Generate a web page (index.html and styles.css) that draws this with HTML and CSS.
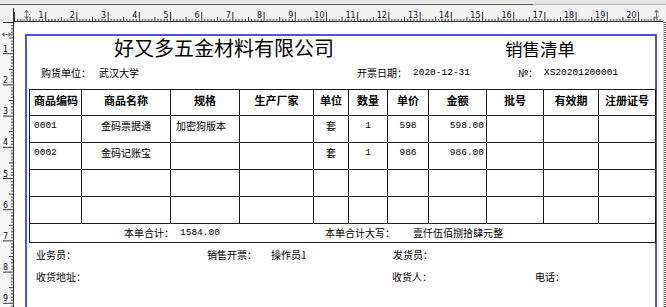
FILE: index.html
```html
<!DOCTYPE html>
<html lang="zh">
<head>
<meta charset="utf-8">
<title>销售清单 - 打印预览</title>
<link rel="stylesheet" href="styles.css">
</head>
<body>
<div class="app">
  <div class="topbar">
    <svg class="hruler" width="666" height="22" viewBox="0 0 666 22">
      <defs>
        <pattern id="hticks" x="14" y="0" width="31.2" height="22" patternUnits="userSpaceOnUse">
          <path d="M0.5 12V21 M3.6 19V21 M6.7 19V21 M9.9 19V21 M13 19V21 M16.1 17V21 M19.2 19V21 M22.3 19V21 M25.5 19V21 M28.6 19V21" stroke="#333" stroke-width="1" fill="none"/>
        </pattern>
      </defs>
      <rect width="666" height="22" fill="#f2f2f2"/>
      <rect width="666" height="4" fill="#e6e6e6"/>
      <line x1="0" y1="4.5" x2="533" y2="4.5" stroke="#5a5a5a"/>
      <line x1="533" y1="4.5" x2="666" y2="4.5" stroke="#b8b8b8"/>
      <rect x="14" y="8" width="649" height="14" fill="url(#hticks)"/>
      <line x1="13" y1="21.5" x2="663" y2="21.5" stroke="#333"/>
      <line x1="13.5" y1="8" x2="13.5" y2="22" stroke="#333"/>
      <g class="ruler-num" text-anchor="end">
        <text x="43.7" y="18">1</text><text x="74.9" y="18">2</text><text x="106.1" y="18">3</text><text x="137.3" y="18">4</text><text x="168.5" y="18">5</text>
        <text x="199.7" y="18">6</text><text x="230.9" y="18">7</text><text x="262.1" y="18">8</text><text x="293.3" y="18">9</text><text x="324.5" y="18">10</text>
        <text x="355.7" y="18">11</text><text x="386.9" y="18">12</text><text x="418.1" y="18">13</text><text x="449.3" y="18">14</text><text x="480.5" y="18">15</text>
        <text x="511.7" y="18">16</text><text x="542.9" y="18">17</text><text x="574.1" y="18">18</text><text x="605.3" y="18">19</text><text x="636.5" y="18">20</text>
      </g>
      <g class="marker" stroke="#777" fill="#777">
        <path d="M26.5 10V19" fill="none"/>
        <path d="M24 12.5L26.5 9.5L29 12.5Z M24 16.5L26.5 19.5L29 16.5Z" stroke="none"/>
        <rect x="29" y="14" width="1" height="1" stroke="none"/>
        <path d="M656.5 10V19" fill="none"/>
        <path d="M654 12.5L656.5 9.5L659 12.5Z M654 16.5L656.5 19.5L659 16.5Z" stroke="none"/>
      </g>
    </svg>
  </div>
  <div class="main">
    <div class="vruler">
      <svg width="14" height="285" viewBox="0 0 14 285">
        <defs>
          <pattern id="vticks" x="0" y="0" width="14" height="31.2" patternUnits="userSpaceOnUse">
            <path d="M3 0.5H13 M11 3.6H13 M11 6.7H13 M11 9.9H13 M11 13H13 M9 16.1H13 M11 19.2H13 M11 22.3H13 M11 25.5H13 M11 28.6H13" stroke="#333" stroke-width="1" fill="none"/>
          </pattern>
        </defs>
        <rect width="14" height="285" fill="#f6f6f6"/>
        <rect x="0" y="0" width="13" height="285" fill="url(#vticks)"/>
        <line x1="13.5" y1="0" x2="13.5" y2="285" stroke="#333"/>
        <g class="ruler-num">
          <text x="3" y="29.7">1</text><text x="3" y="60.9">2</text><text x="3" y="92.1">3</text><text x="3" y="123.3">4</text><text x="3" y="154.5">5</text>
          <text x="3" y="185.7">6</text><text x="3" y="216.9">7</text><text x="3" y="248.1">8</text><text x="3" y="279.3">9</text>
        </g>
        <g class="marker" stroke="#777" fill="#777">
          <path d="M2 12.5H11" fill="none"/>
          <path d="M4.5 10L1.5 12.5L4.5 15Z M8.5 10L11.5 12.5L8.5 15Z" stroke="none"/>
        </g>
      </svg>
    </div>
    <div class="workspace">
      <div class="page">
        <div class="title-row">
          <h1 class="company">好又多五金材料有限公司</h1>
          <div class="doc-type">销售清单</div>
        </div>
        <div class="info-row">
          <div class="field"><span class="label">购货单位：</span><span class="value">武汉大学</span></div>
          <div class="field"><span class="label">开票日期：</span><span class="value num">2020-12-31</span></div>
          <div class="field"><span class="label short">№：</span><span class="value num">XS20201200001</span></div>
        </div>
        <table class="items">
          <colgroup>
            <col style="width:52px"><col style="width:89px"><col style="width:69px"><col style="width:74px"><col style="width:35px"><col style="width:39px"><col style="width:41px"><col style="width:58px"><col style="width:57px"><col style="width:55px"><col style="width:57px">
          </colgroup>
          <thead>
            <tr>
              <th>商品编码</th><th>商品名称</th><th>规格</th><th>生产厂家</th><th>单位</th><th>数量</th><th>单价</th><th>金额</th><th>批号</th><th>有效期</th><th>注册证号</th>
            </tr>
          </thead>
          <tbody>
            <tr>
              <td class="num">0001</td><td class="c">金码票据通</td><td class="l">加密狗版本</td><td></td><td class="c">套</td><td class="c num">1</td><td class="c num">598</td><td class="r num">598.00</td><td></td><td></td><td></td>
            </tr>
            <tr>
              <td class="num">0002</td><td class="c">金码记账宝</td><td class="l"></td><td></td><td class="c">套</td><td class="c num">1</td><td class="c num">986</td><td class="r num">986.00</td><td></td><td></td><td></td>
            </tr>
            <tr><td></td><td></td><td></td><td></td><td></td><td></td><td></td><td></td><td></td><td></td><td></td></tr>
            <tr><td></td><td></td><td></td><td></td><td></td><td></td><td></td><td></td><td></td><td></td><td></td></tr>
            <tr class="total-row">
              <td colspan="11">
                <div class="totals">
                  <span class="t-label">本单合计：</span><span class="num t-sum">1584.00</span>
                  <span class="t-label t-upper">本单合计大写：</span><span class="t-words">壹仟伍佰捌拾肆元整</span>
                </div>
              </td>
            </tr>
          </tbody>
        </table>
        <div class="footer">
          <div>业务员：</div>
          <div>销售开票：<span class="operator">操作员1</span></div>
          <div>发货员：</div>
          <div></div>
          <div>收货地址：</div>
          <div></div>
          <div class="receiver">收货人：</div>
          <div>电话：</div>
        </div>
      </div>
    </div>
    <div class="scroll-dots"></div>
  </div>
</div>
</body>
</html>
```

FILE: styles.css
```css
* { box-sizing: border-box; }

html, body {
  margin: 0;
  padding: 0;
}

body {
  width: 666px;
  height: 307px;
  overflow: hidden;
  background: #ffffff;
  color: #000;
  font-family: "Noto Sans CJK SC", "Noto Sans CJK JP", sans-serif;
  font-size: 10px;
}

.topbar { height: 22px; }
.topbar svg, .vruler svg { display: block; }

.ruler-num text {
  font-family: "DejaVu Sans", sans-serif;
  font-size: 8px;
  fill: #101030;
}

.main {
  display: flex;
  height: 285px;
}

.vruler {
  width: 14px;
  flex: none;
}

.workspace {
  flex: 1;
  padding: 12px 0 0 11px;
  overflow: hidden;
}

.scroll-dots {
  width: 3px;
  flex: none;
  background: repeating-linear-gradient(to bottom, #555 0 1px, #fff 1px 2px);
  border-left: 1px solid #cfcfcf;
}

.page {
  width: 632px;
  height: 300px;
  border: 2px solid #5050f0;
}

.title-row {
  display: flex;
  align-items: center;
  height: 24px;
}

.company {
  margin: 0 0 0 87px;
  font-size: 20px;
  font-weight: 400;
  line-height: 24px;
}

.doc-type {
  margin-left: 171px;
  font-size: 17.5px;
  line-height: 24px;
  padding-top: 2px;
}

.info-row {
  display: grid;
  grid-template-columns: 316px 161px 1fr;
  margin-top: 6px;
  padding-left: 14px;
  line-height: 14px;
}

.field { display: flex; }
.field .label { margin-right: 8px; }
.field:nth-child(2) .label { margin-right: 6px; }
.field .label.short { margin-right: 6px; }

.num {
  font-family: "Liberation Mono", "DejaVu Sans Mono", monospace;
  font-size: 9.5px;
}

.items {
  border-collapse: collapse;
  table-layout: fixed;
  width: 626px;
  margin: 9px 0 0 2px;
}

.items th,
.items td {
  border: 1px solid #1a1a1a;
  padding: 3px 4px 0;
  vertical-align: top;
  line-height: 14px;
  white-space: nowrap;
  overflow: hidden;
}

.items th {
  font-size: 11px;
  font-weight: 700;
  text-align: center;
}

.items thead tr { height: 26px; }
.items tbody tr { height: 27px; }
.items tbody tr.total-row { height: 19px; }

.items td.c { text-align: center; }
.items td.l { padding-left: 5px; }
.items td.r { text-align: right; padding-right: 2px; }

.items .total-row td {
  padding: 2px 0 0;
}

.totals {
  display: flex;
  align-items: center;
  line-height: 14px;
  padding-left: 94px;
}

.t-sum { margin-left: 6px; }
.t-upper { margin-left: 105px; }
.t-words { margin-left: 18px; }

.footer {
  display: grid;
  grid-template-columns: 171px 186px 142px 1fr;
  padding-left: 9px;
  margin-top: 5px;
  row-gap: 8px;
  line-height: 14px;
}

.operator { margin-left: 14px; }
.receiver { margin-left: -1px; }
```
